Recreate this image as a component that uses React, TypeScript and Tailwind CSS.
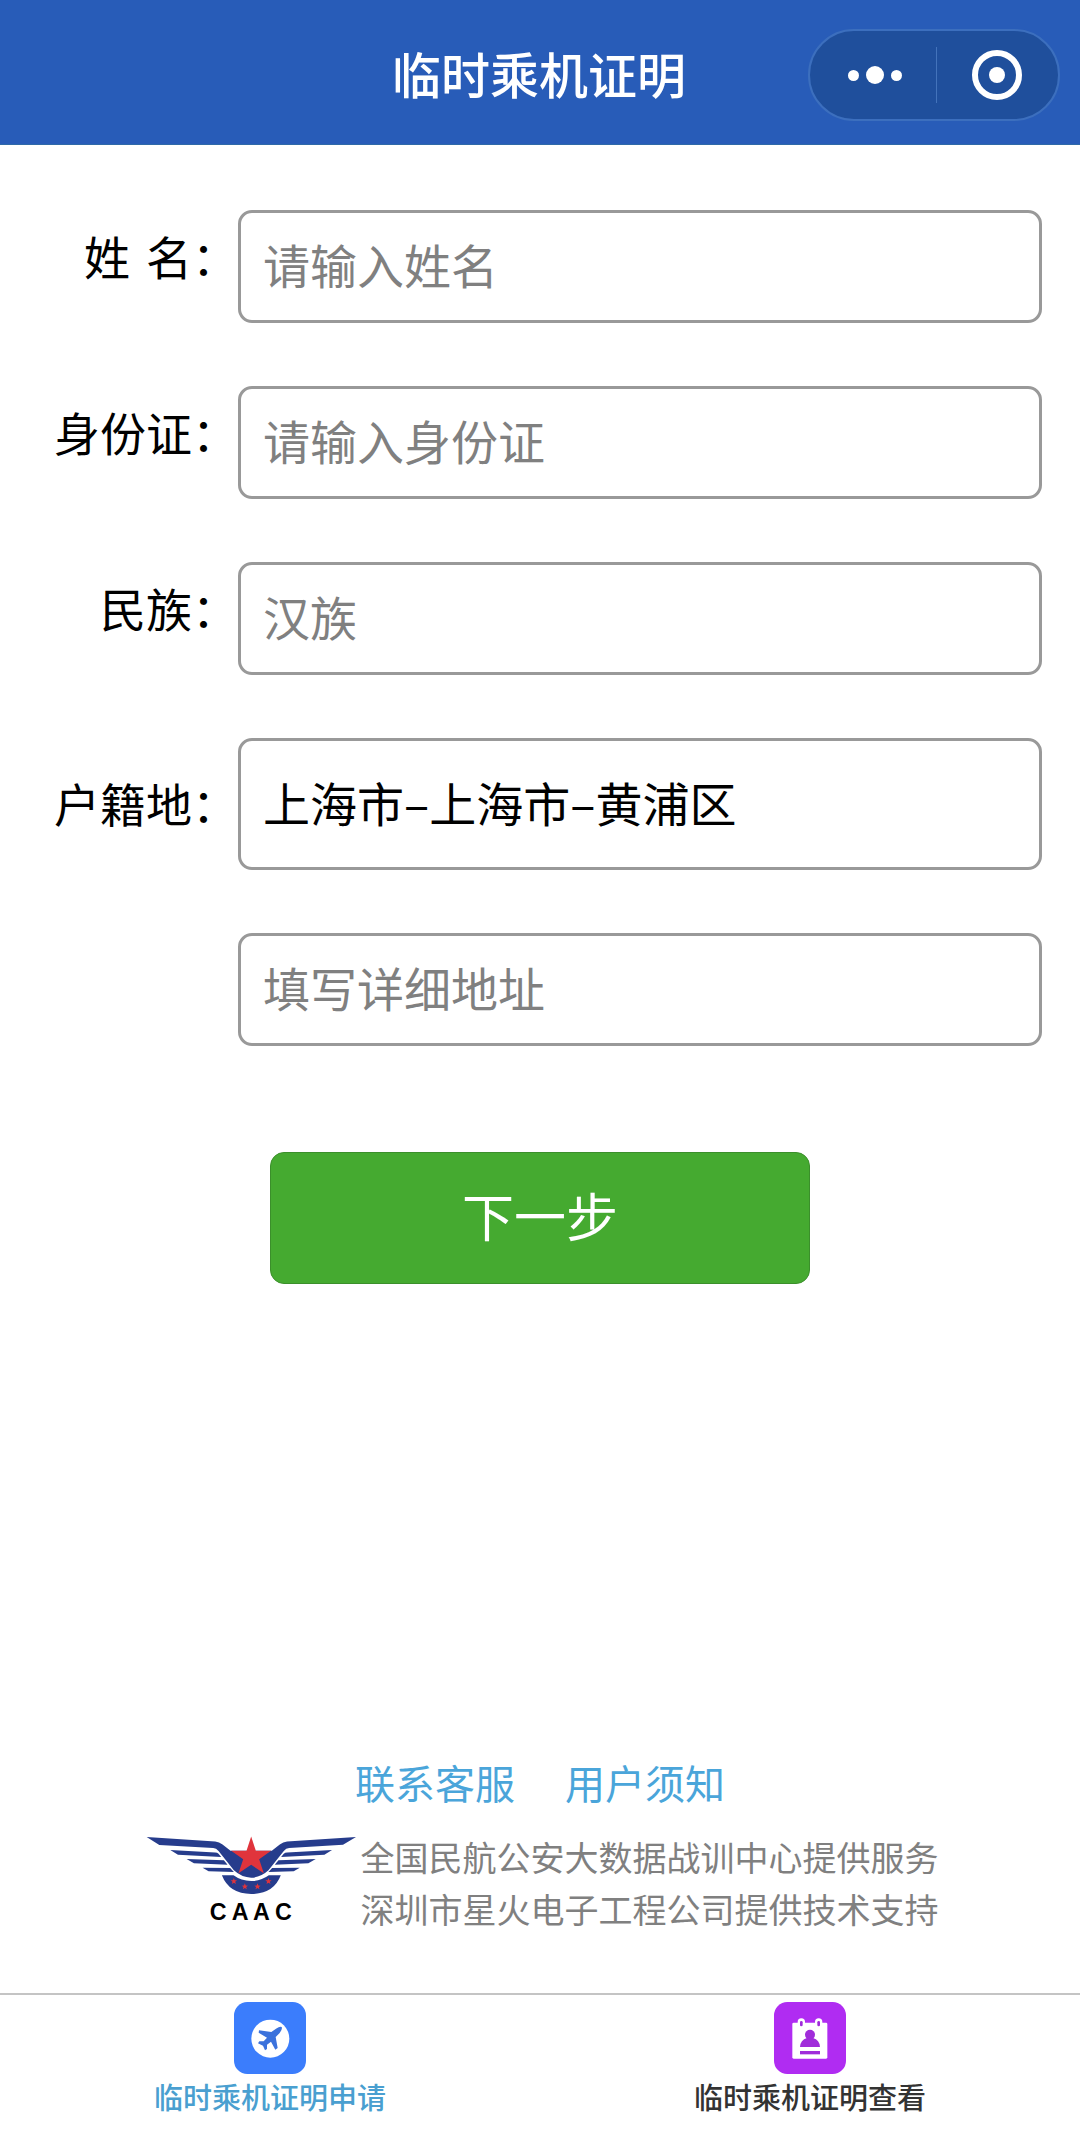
import type { ReactNode } from "react";

const boxClass =
  "block w-full min-w-0 flex-1 rounded-[14px] border-[3px] border-[#999999] bg-white px-[22px] pb-1.5 text-[47px] leading-[64px] text-black placeholder:text-[#808080] placeholder:opacity-100 focus:outline-none focus:border-[#285cb8]";

function Header() {
  return (
    <header className="grid h-[145px] grid-cols-[1fr_auto_1fr] items-center border-b border-[#2f6aa8] bg-[#285cb8] pt-1.5 pr-5">
      <span />
      <h1 className="pb-1 pl-[18px] text-[49px] leading-[64px] font-medium text-white">临时乘机证明</h1>
      <div className="flex h-[92px] w-[252px] items-center justify-self-end rounded-full border-2 border-[#3c6fbe] bg-[#1f4f9c]">
        <button type="button" aria-label="更多" className="flex h-full flex-1 items-center justify-center gap-[7px] pl-1">
          <span className="size-[11px] rounded-full bg-white" />
          <span className="size-[18px] rounded-full bg-white" />
          <span className="size-[11px] rounded-full bg-white" />
        </button>
        <span className="h-14 w-px bg-[#4373bb]" />
        <button type="button" aria-label="关闭" className="flex h-full flex-1 items-center justify-center">
          <span className="flex size-[50px] items-center justify-center rounded-full border-[6px] border-white">
            <span className="size-4 rounded-full bg-white" />
          </span>
        </button>
      </div>
    </header>
  );
}

function Row({ id, label, raised = true, children }: { id: string; label?: ReactNode; raised?: boolean; children: ReactNode }) {
  return (
    <div className="flex items-center">
      <div className={raised ? "w-[238px] shrink-0 pb-6" : "w-[238px] shrink-0 pb-1"}>
        {label && (
          <label htmlFor={id} className="flex justify-end text-[46px] leading-[64px] text-black">
            {label}
          </label>
        )}
      </div>
      {children}
    </div>
  );
}

function CaacLogo() {
  return (
    <svg viewBox="20 32 634 288" className="mt-1 h-[96px] w-[211px] shrink-0" role="img" aria-label="CAAC">
      <g fill="#263c8c">
        <path d="M22 38 L228 51 Q240 52 250 60 L274 79 H398 L422 60 Q432 52 444 51 L651 38 L612 61 L450 71 Q441 71 434 80 L388 138 Q364 160 336 160 Q308 160 284 138 L238 80 Q231 71 222 71 L60 62 Z" />
        <path d="M93 77 L228 84 Q234 84 238 88 L246 98 L116 91 Z" />
        <path d="M142 104 L254 108 L265 121 L164 117 Z" />
        <path d="M190 130 L273 131 L284 143 L208 141 Z" />
        <path d="M579 77 L444 84 Q438 84 434 88 L426 98 L556 91 Z" />
        <path d="M530 104 L418 108 L407 121 L508 117 Z" />
        <path d="M482 130 L399 131 L388 143 L464 141 Z" />
        <path d="M248 153 H283 Q306 170 336 170 Q366 170 389 153 H425 Q404 209 336 209 Q270 209 248 153 Z" />
      </g>
      <polygon fill="#e0343c" points="336,36 350,79 396,79 360,105 374,147 336,121 298,147 312,105 276,79 322,79" />
      <g fill="#e0343c">
        {[[284, 171], [317, 187], [355, 187], [388, 171]].map(([x, y]) => (
          <polygon
            key={x}
            points="0,-10 2.6,-3.5 9.5,-3 4,1.3 6,8 0,4.2 -6,8 -4,1.3 -9.5,-3 -2.6,-3.5"
            transform={`translate(${x} ${y})`}
          />
        ))}
      </g>
      <g fill="#000000" fontFamily="Liberation Sans, sans-serif" fontWeight="700" fontSize="70" textAnchor="middle">
        <text x="237" y="286">C</text>
        <text x="303" y="286">A</text>
        <text x="367" y="286">A</text>
        <text x="433" y="286">C</text>
      </g>
    </svg>
  );
}

function PlaneIcon() {
  return (
    <svg viewBox="312 66 216 216" className="size-[72px]" aria-hidden="true">
      <rect x="312" y="66" width="216" height="216" rx="40" fill="#3b7dfc" />
      <circle cx="421" cy="176" r="57" fill="#ffffff" />
      <path
        fill="#3b72dc"
        d="M438 146 Q450 138 455 141 Q458 147 449 159 L437 171 L443 204 L436 209 L423 185 L411 194 L411 207 L405 211 L399 197 L384 190 L388 184 L401 184 L411 173 L386 158 L387 151 L424 156 Z"
      />
    </svg>
  );
}

function BadgeIcon() {
  return (
    <svg viewBox="312 66 216 216" className="size-[72px]" aria-hidden="true">
      <rect x="312" y="66" width="216" height="216" rx="40" fill="#b02cf2" />
      <rect x="367" y="128" width="105" height="108" rx="4" fill="#ffffff" />
      <rect x="383" y="115" width="22" height="30" rx="11" fill="#ffffff" />
      <rect x="435" y="115" width="22" height="30" rx="11" fill="#ffffff" />
      <g fill="#a02cda">
        <rect x="390" y="123" width="8" height="16" rx="4" />
        <rect x="442" y="123" width="8" height="16" rx="4" />
        <circle cx="420" cy="164" r="15" />
        <path d="M390 201 Q391 180 411 174 H429 Q449 180 450 201 Z" />
        <rect x="390" y="213" width="60" height="10" />
      </g>
    </svg>
  );
}

export default function App() {
  return (
    <div className="flex min-h-screen flex-col bg-white font-['Noto_Sans_CJK_SC',sans-serif]">
      <Header />

      <main className="flex flex-1 flex-col">
        <form className="flex flex-col pt-[65px]" onSubmit={(e) => e.preventDefault()}>
          <div className="flex flex-col gap-[63px] pr-[38px]">
            <Row
              id="name"
              label={
                <span className="flex gap-4">
                  <span>姓</span>
                  <span>名：</span>
                </span>
              }
            >
              <input id="name" type="text" placeholder="请输入姓名" className={`${boxClass} h-[113px]`} />
            </Row>
            <Row id="idcard" label="身份证：">
              <input id="idcard" type="text" placeholder="请输入身份证" className={`${boxClass} h-[113px]`} />
            </Row>
            <Row id="ethnic" label="民族：">
              <input id="ethnic" type="text" placeholder="汉族" className={`${boxClass} h-[113px]`} />
            </Row>
            <Row id="region" label="户籍地：" raised={false}>
              <input id="region" type="text" defaultValue="上海市–上海市–黄浦区" className={`${boxClass} h-[132px]`} />
            </Row>
            <Row id="address">
              <input id="address" type="text" aria-label="详细地址" placeholder="填写详细地址" className={`${boxClass} h-[113px]`} />
            </Row>
          </div>
          <button
            type="submit"
            className="mt-[106px] h-[132px] w-1/2 self-center rounded-[14px] border border-[#3b8f2b] bg-[#45aa30] pb-1.5 text-[52px] leading-[64px] text-white"
          >
            下一步
          </button>
        </form>

        <footer className="mt-auto flex flex-col items-center pb-[58px]">
          <div className="flex gap-[50px] text-[40px] leading-[56px] text-[#4aa5da]">
            <a href="#service">联系客服</a>
            <a href="#notice">用户须知</a>
          </div>
          <div className="mt-[21px] flex items-start pl-1">
            <CaacLogo />
            <p className="pl-1 text-[34px] leading-[52px] whitespace-nowrap text-[#808080]">
              全国民航公安大数据战训中心提供服务
              <br />
              深圳市星火电子工程公司提供技术支持
            </p>
          </div>
        </footer>
      </main>

      <nav className="grid h-[142px] grid-cols-2 border-t-2 border-[#c4c4c4] pt-[7px] text-[29px] leading-[44px] font-medium">
        <a href="#apply" aria-current="page" className="flex flex-col items-center text-[#4a9fd0]">
          <PlaneIcon />
          临时乘机证明申请
        </a>
        <a href="#view" className="flex flex-col items-center text-[#333333]">
          <BadgeIcon />
          临时乘机证明查看
        </a>
      </nav>
    </div>
  );
}
